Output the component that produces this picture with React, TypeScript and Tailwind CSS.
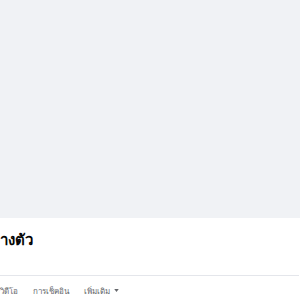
export default function App() {
  const tabs = ["วิดีโอ", "การเช็คอิน"];
  return (
    <div className="w-[300px] h-[300px] overflow-hidden bg-white font-['Noto_Sans','Liberation_Sans',sans-serif]">
      {/* cover area */}
      <div className="h-[218px] bg-[#f0f2f5]" />

      {/* profile name */}
      <div className="h-[57px] pt-[9px]">
        <h1 className="text-[15px] font-bold leading-[24px] text-[#050505]">างตัว</h1>
      </div>

      {/* tabs */}
      <div className="border-t border-[#e4e6eb] mr-[1px]">
        <div className="flex items-center gap-[15px] h-[29px] text-[8px] text-[#65676b]">
          {tabs.map((t) => (
            <span key={t}>{t}</span>
          ))}
          <span className="flex items-center gap-[4px]">
            เพิ่มเติม
            <svg width="5" height="3" viewBox="0 0 6 4" className="fill-[#65676b]">
              <path d="M0 0h6L3 4z" />
            </svg>
          </span>
        </div>
      </div>
    </div>
  );
}
